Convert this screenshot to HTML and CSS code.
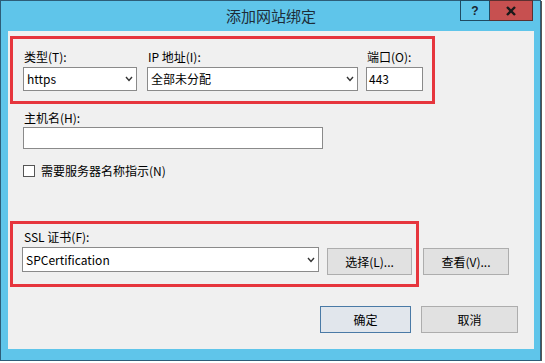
FILE: index.html
```html
<!DOCTYPE html>
<html lang="zh-CN">
<head>
<meta charset="utf-8">
<title>添加网站绑定</title>
<link rel="stylesheet" href="styles.css">
</head>
<body>
<div class="window">
  <div class="titlebar">
    <div class="tb-spacer"></div>
    <div class="title">添加网站绑定</div>
    <div class="tb-controls">
      <div class="ctl help">?</div>
      <div class="ctl close">
        <svg width="12" height="10" viewBox="0 0 12 10"><path d="M2 1 L10 9 M10 1 L2 9" stroke="#1a1a1a" stroke-width="2.4" fill="none"/></svg>
      </div>
    </div>
  </div>
  <div class="content">
    <div class="mark binding">
      <div class="field">
        <div class="label">类型(T):</div>
        <div class="select sel-type"><span>https</span><svg class="chev" width="8" height="6" viewBox="0 0 8 6"><path d="M1 1 L4 4.5 L7 1" stroke="#333" stroke-width="1.4" fill="none"/></svg></div>
      </div>
      <div class="field">
        <div class="label">IP 地址(I):</div>
        <div class="select sel-ip"><span>全部未分配</span><svg class="chev" width="8" height="6" viewBox="0 0 8 6"><path d="M1 1 L4 4.5 L7 1" stroke="#333" stroke-width="1.4" fill="none"/></svg></div>
      </div>
      <div class="field">
        <div class="label">端口(O):</div>
        <div class="input port">443</div>
      </div>
    </div>
    <div class="host">
      <div class="label">主机名(H):</div>
      <div class="input hostname"></div>
    </div>
    <div class="check">
      <span class="box"></span>
      <span>需要服务器名称指示(N)</span>
    </div>
    <div class="ssl-line">
      <div class="mark ssl">
        <div class="label">SSL 证书(F):</div>
        <div class="ssl-row">
          <div class="select sel-ssl"><span>SPCertification</span><svg class="chev" width="8" height="6" viewBox="0 0 8 6"><path d="M1 1 L4 4.5 L7 1" stroke="#333" stroke-width="1.4" fill="none"/></svg></div>
          <div class="btn btn-select">选择(L)...</div>
        </div>
      </div>
      <div class="btn btn-view">查看(V)...</div>
    </div>
    <div class="actions">
      <div class="btn btn-ok">确定</div>
      <div class="btn btn-cancel">取消</div>
    </div>
  </div>
</div>
</body>
</html>
```
FILE: styles.css
```css
html, body {
  margin: 0;
  padding: 0;
  background: #ffffff;
}
body {
  font-family: "Noto Sans CJK SC", "Noto Sans", sans-serif;
  font-size: 12px;
  color: #000;
}
.window {
  width: 541px;
  height: 361px;
  box-sizing: border-box;
  border: 1px solid #2d5d78;
  background: #5fc5ea;
  padding: 0 6px 11px 7px;
  display: flex;
  flex-direction: column;
  box-shadow: 1px 1px 0 #555;
}
.titlebar {
  height: 31px;
  margin-top: -1px;
  display: grid;
  grid-template-columns: 1fr auto 1fr;
  flex-shrink: 0;
}
.title {
  font-size: 15px;
  line-height: 20px;
  padding-top: 6px;
  color: #1d2c38;
}
.tb-controls {
  display: flex;
  justify-content: flex-end;
  align-items: flex-start;
  padding-right: 1px;
}
.ctl {
  height: 21px;
  box-sizing: border-box;
  border: 1px solid #1f4b63;
  display: flex;
  align-items: center;
  justify-content: center;
}
.help {
  width: 29px;
  border-right: none;
  background: #5fc5ea;
  font-family: "Liberation Sans", sans-serif;
  font-weight: bold;
  font-size: 12px;
  color: #1a2630;
}
.close {
  width: 44px;
  background: #c75050;
  border-color: #5b3030 #5b3030 #5b3030 #1f4b63;
}
.content {
  flex: 1;
  background: #f0f0f0;
  display: flex;
  flex-direction: column;
  align-items: flex-start;
}
.label {
  line-height: 16px;
  padding-left: 1px;
  white-space: nowrap;
}
.mark {
  box-sizing: border-box;
  border: 3px solid #e6353d;
}
.binding {
  margin-left: 2px;
  margin-top: 5px;
  width: 425px;
  padding: 10px 9px 10px 10px;
  display: flex;
  gap: 10px;
}
.binding .field:last-child {
  margin-left: -2px;
}
.field {
  display: flex;
  flex-direction: column;
  gap: 2px;
}
.select, .input {
  box-sizing: border-box;
  background: #fff;
  border: 1px solid #8a8a8a;
  display: flex;
  align-items: center;
  padding-left: 3px;
  line-height: 16px;
  white-space: nowrap;
}
.select {
  justify-content: space-between;
  padding-right: 3px;
}
.chev {
  flex-shrink: 0;
}
.sel-type { width: 114px; height: 24px; }
.sel-ip { width: 211px; height: 24px; }
.port { width: 57px; height: 24px; padding-left: 2px; }
.host {
  margin-top: 6px;
  margin-left: 15px;
  display: flex;
  flex-direction: column;
  gap: 1px;
}
.hostname {
  width: 300px;
  height: 22px;
}
.check {
  margin-top: 14px;
  margin-left: 15px;
  display: flex;
  align-items: center;
  gap: 6px;
  line-height: 16px;
}
.box {
  width: 12px;
  height: 12px;
  box-sizing: border-box;
  border: 1px solid #555;
  background: #fff;
}
.ssl-line {
  margin-top: 42px;
  margin-left: 2px;
  display: flex;
  align-items: flex-start;
  gap: 4px;
}
.ssl {
  width: 409px;
  padding: 5px 4px 9px 9px;
  display: flex;
  flex-direction: column;
  gap: 2px;
}
.ssl .label {
  padding-left: 2px;
}
.ssl-row {
  display: flex;
  align-items: flex-start;
  gap: 8px;
}
.sel-ssl {
  width: 297px;
  height: 25px;
}
.btn {
  box-sizing: border-box;
  height: 27px;
  border: 1px solid #adadad;
  background: #e1e1e1;
  display: flex;
  align-items: center;
  justify-content: center;
  line-height: 16px;
  white-space: nowrap;
}
.btn-select {
  width: 85px;
  margin-top: 1px;
}
.btn-view {
  width: 86px;
  margin-top: 27px;
}
.actions {
  margin-top: 19px;
  align-self: stretch;
  display: flex;
  justify-content: flex-end;
  gap: 10px;
  padding-right: 16px;
}
.btn-ok {
  width: 91px;
  border-color: #4a7aa6;
  background: #e1e6ec;
}
.btn-cancel {
  width: 97px;
}
```
